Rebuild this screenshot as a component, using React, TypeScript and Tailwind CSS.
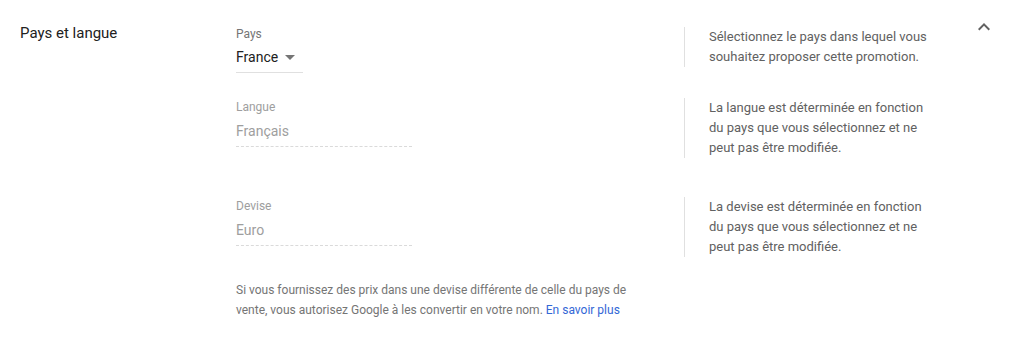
import React from 'react'

const Help = ({ children }: { children: React.ReactNode }) => (
  <div className="border-l border-[#e0e0e0] pl-6 w-[260px]">
    <p className="text-[13px] leading-5 text-[#616161] w-[224px]">{children}</p>
  </div>
)

const ReadOnlyField = ({ label, value }: { label: string; value: string }) => (
  <div className="w-[176px] pt-px pb-[5px] border-b border-dashed border-[#dadada]">
    <div className="text-xs leading-4 text-[#9e9e9e]">{label}</div>
    <div className="mt-[6px] text-sm leading-5 text-[#9e9e9e]">{value}</div>
  </div>
)

export default function App() {
  return (
    <div
      className="w-[1016px] h-[348px] bg-white flex pl-5 pr-5 pt-[23px]"
      style={{ fontFamily: 'Roboto, "Liberation Sans", sans-serif' }}
    >
      {/* Section title */}
      <div className="w-[216px] shrink-0">
        <h2 className="text-[15px] leading-5 text-[#212121]">Pays et langue</h2>
      </div>

      <div className="flex-1 pt-[3px]">
        {/* Pays */}
        <div className="flex">
          <div className="w-[448px] shrink-0">
            <div className="inline-block pb-[5px] border-b border-[#e0e0e0]">
              <div className="text-xs leading-4 text-[#757575]">Pays</div>
              <div className="mt-[5px] flex items-center pr-2 text-sm leading-5 text-[#212121]">
                France
                <svg className="ml-[7px] mt-px" width="10" height="5" viewBox="0 0 10 5">
                  <path d="M0 0h10L5 5z" fill="#757575" />
                </svg>
              </div>
            </div>
          </div>
          <div className="mt-px">
            <Help>Sélectionnez le pays dans lequel vous souhaitez proposer cette promotion.</Help>
          </div>
        </div>

        {/* Langue */}
        <div className="flex mt-[25px]">
          <div className="w-[448px] shrink-0">
            <ReadOnlyField label="Langue" value="Français" />
          </div>
          <Help>La langue est déterminée en fonction du pays que vous sélectionnez et ne peut pas être modifiée.</Help>
        </div>

        {/* Devise */}
        <div className="flex mt-[39px]">
          <div className="w-[448px] shrink-0">
            <ReadOnlyField label="Devise" value="Euro" />
          </div>
          <Help>La devise est déterminée en fonction du pays que vous sélectionnez et ne peut pas être modifiée.</Help>
        </div>

        <p className="mt-[23px] w-[410px] text-xs leading-5 text-[#757575]">
          Si vous fournissez des prix dans une devise différente de celle du pays de vente, vous autorisez Google à
          les convertir en votre nom. <span className="text-[#3367d6] cursor-pointer">En savoir plus</span>
        </p>
      </div>

      {/* Collapse */}
      <div className="shrink-0 -mt-2">
        <svg width="24" height="24" viewBox="0 0 24 24">
          <path d="M12 8l-6 6 1.41 1.41L12 10.83l4.59 4.58L18 14z" fill="#616161" />
        </svg>
      </div>
    </div>
  )
}
